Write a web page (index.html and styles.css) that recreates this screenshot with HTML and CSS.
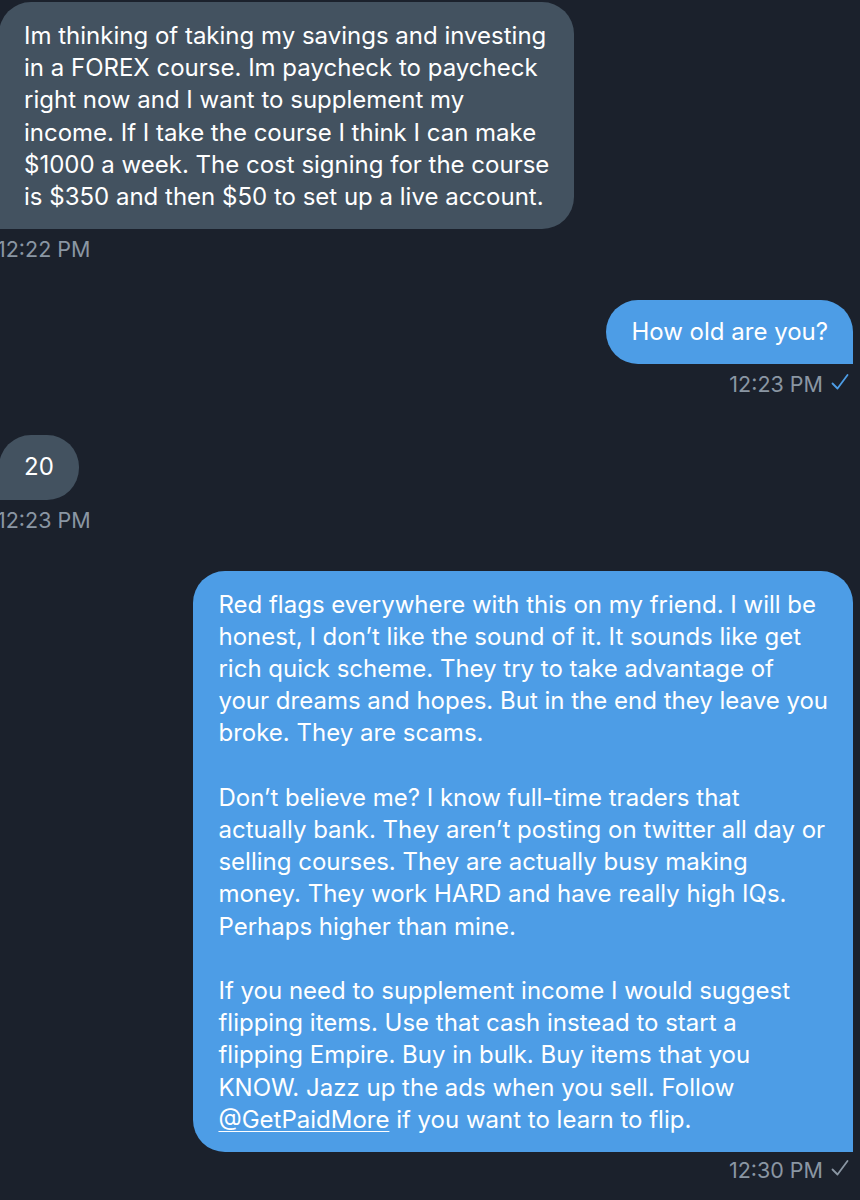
FILE: index.html
```html
<!DOCTYPE html>
<html>
<head>
<meta charset="utf-8">
<link rel="stylesheet" href="styles.css">
</head>
<body>
<div class="chat">
  <div class="msg in first">
    <div class="bubble">Im thinking of taking my savings and investing<br>in a FOREX course. Im paycheck to paycheck<br>right now and I want to supplement my<br>income. If I take the course I think I can make<br>$1000 a week. The cost signing for the course<br>is $350 and then $50 to set up a live account.</div>
    <div class="time">12:22 PM</div>
  </div>
  <div class="msg out">
    <div class="bubble">How old are you?</div>
    <div class="time">12:23 PM <svg class="check read" viewBox="0 0 18 18" width="18" height="18"><path d="M1.5 10.5 L6.5 15.5 L16.5 2" fill="none" stroke="currentColor" stroke-width="1.8" stroke-linecap="round" stroke-linejoin="round"/></svg></div>
  </div>
  <div class="msg in">
    <div class="bubble">20</div>
    <div class="time">12:23 PM</div>
  </div>
  <div class="msg out long">
    <div class="bubble">Red flags everywhere with this on my friend. I will be<br>honest, I don’t like the sound of it. It sounds like get<br>rich quick scheme. They try to take advantage of<br>your dreams and hopes. But in the end they leave you<br>broke. They are scams.<br><br>Don’t believe me? I know full-time traders that<br>actually bank. They aren’t posting on twitter all day or<br>selling courses. They are actually busy making<br>money. They work HARD and have really high IQs.<br>Perhaps higher than mine.<br><br>If you need to supplement income I would suggest<br>flipping items. Use that cash instead to start a<br>flipping Empire. Buy in bulk. Buy items that you<br>KNOW. Jazz up the ads when you sell. Follow<br><a class="mention" href="#">@GetPaidMore</a> if you want to learn to flip.</div>
    <div class="time">12:30 PM <svg class="check" viewBox="0 0 18 18" width="18" height="18"><path d="M1.5 10.5 L6.5 15.5 L16.5 2" fill="none" stroke="currentColor" stroke-width="1.8" stroke-linecap="round" stroke-linejoin="round"/></svg></div>
  </div>
</div>
</body>
</html>
```

FILE: styles.css
```css
html, body {
  margin: 0;
  padding: 0;
  background: #1b212c;
  height: 100%;
}
body {
  font-family: "Inter", "Liberation Sans", sans-serif;
  color: #ffffff;
  overflow: hidden;
}
.chat {
  display: flex;
  flex-direction: column;
  padding-top: 2px;
}
.msg {
  display: flex;
  flex-direction: column;
}
.msg + .msg {
  margin-top: 39px;
}
.msg.in {
  align-items: flex-start;
  margin-left: -1px;
}
.msg.out {
  align-items: flex-end;
  margin-right: 7px;
}
.bubble {
  font-size: 24px;
  line-height: 32.2px;
  padding: 16px 25px;
  border-radius: 32px;
  white-space: nowrap;
}
.first .bubble {
  padding-top: 18px;
}
.long .bubble {
  padding-top: 18px;
}
.in .bubble {
  background: #435260;
  border-bottom-left-radius: 0;
}
.out .bubble {
  background: #4d9de6;
  border-bottom-right-radius: 0;
}
.time {
  display: flex;
  align-items: center;
  gap: 8px;
  font-size: 21.5px;
  line-height: 24px;
  color: #8a96a3;
  margin-top: 8px;
}
.in .time {
  margin-left: -2px;
}
.out .time {
  margin-right: 4px;
}
.long .time {
  margin-top: 6px;
}
.check {
  color: #8a96a3;
  margin-top: -4px;
}
.check.read {
  color: #4d9de6;
}
.mention {
  color: #ffffff;
  text-decoration: underline;
  text-underline-offset: 3px;
  text-decoration-thickness: 1px;
}
```
